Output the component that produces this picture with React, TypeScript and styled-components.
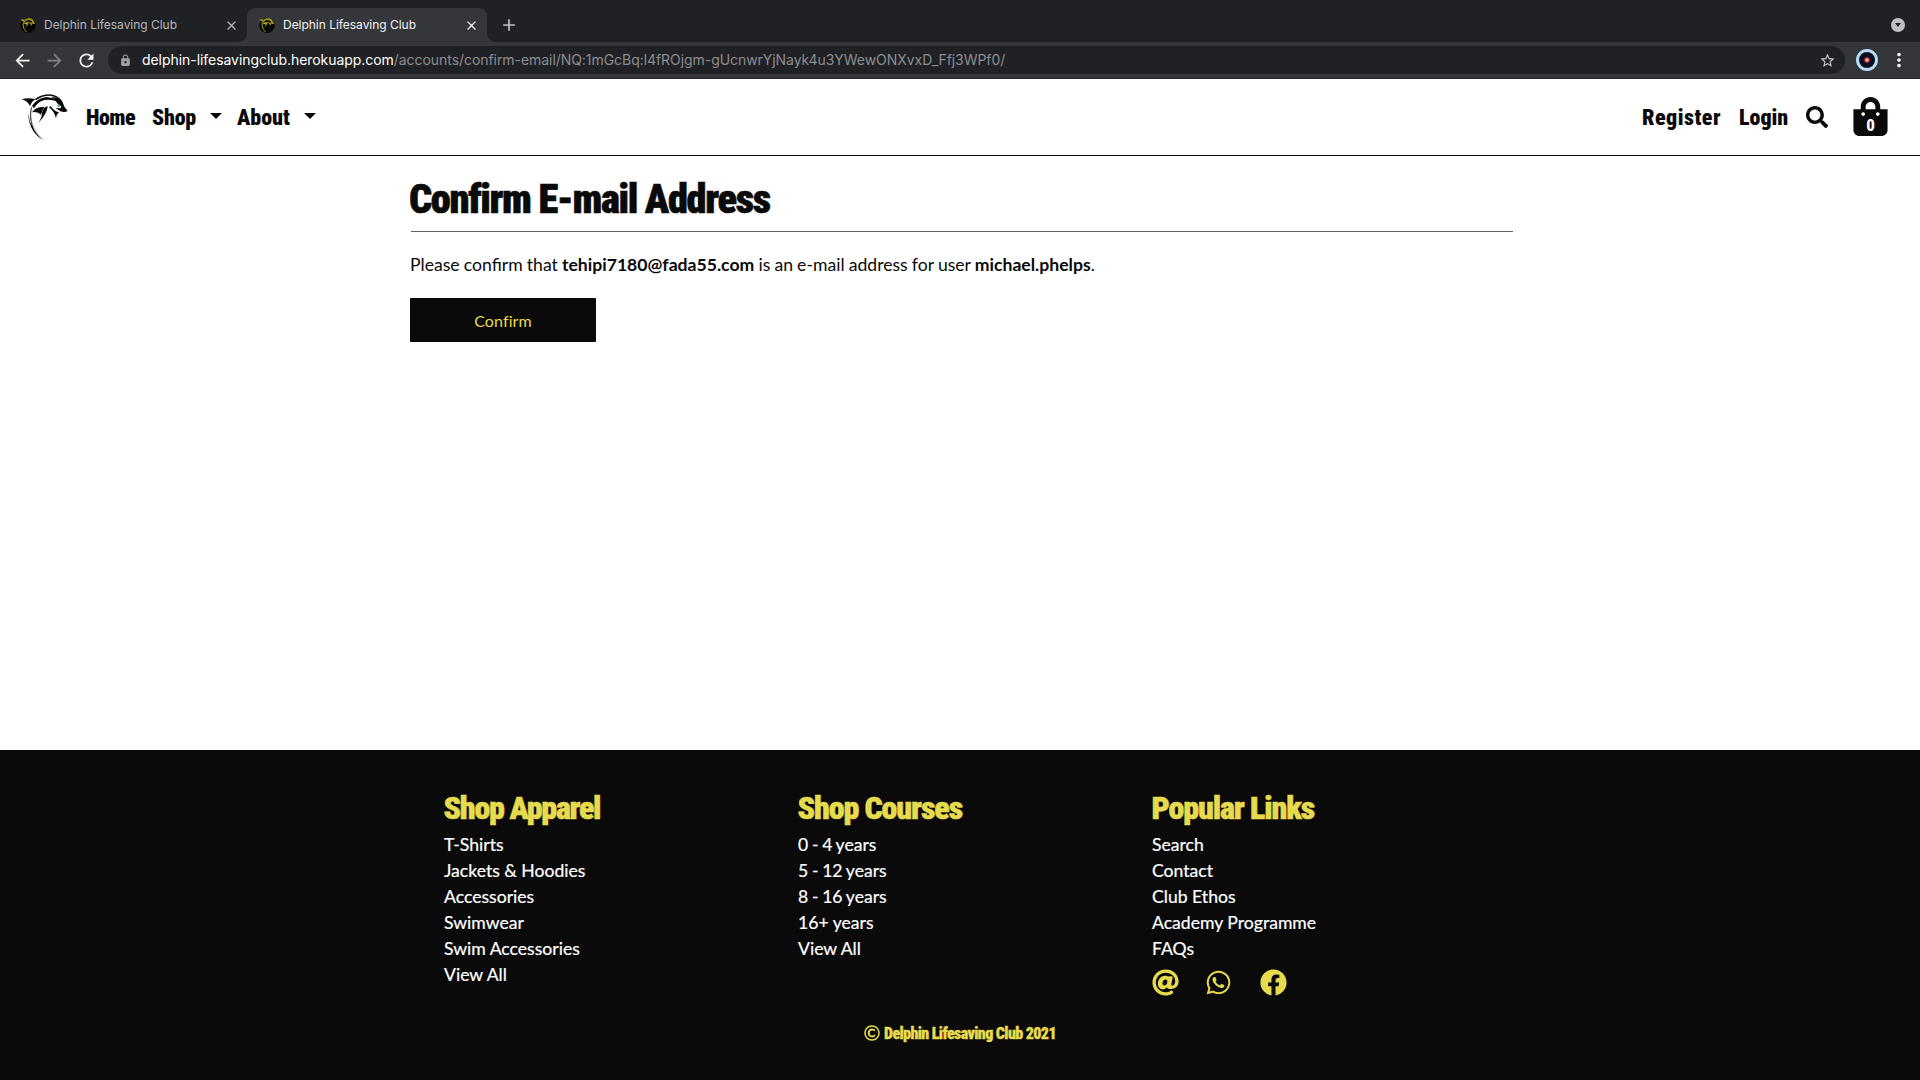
import React from "react";
import styled, { createGlobalStyle, css } from "styled-components";
import { FaAt, FaFacebook, FaRegCopyright, FaSearch, FaShoppingBag, FaWhatsapp } from "react-icons/fa";
import { MdAdd, MdArrowBack, MdArrowForward, MdClose, MdLock, MdMoreVert, MdRefresh, MdStarBorder } from "react-icons/md";

const ink = "#0a0a0a";
const yellow = "#e6db4e";

const GlobalStyle = createGlobalStyle`
  * { box-sizing: border-box; }
  body { margin: 0; background: #fff; color: ${ink}; font-family: Lato, sans-serif; }
  svg { display: block; flex: none; }
  a { color: inherit; text-decoration: none; }
`;

const display = css`
  font-family: Roboto, sans-serif;
  font-stretch: 75%;
  font-weight: 900;
  white-space: nowrap;
`;

const Page = styled.div`
  display: flex;
  flex-direction: column;
  width: 100%;
  height: 1080px;
  overflow: hidden;
`;

/* Browser chrome */
const TabStrip = styled.div`
  display: flex;
  align-items: flex-end;
  height: 42px;
  flex: none;
  background: #202124;
  color: #bdc1c6;
  font: 400 12px Inter, sans-serif;
`;

const Tab = styled.div<{ $active?: boolean }>`
  position: relative;
  display: flex;
  align-items: center;
  width: ${(p) => (p.$active ? 240 : 239)}px;
  height: 34px;
  padding: 0 8px 0 12px;
  margin-left: ${(p) => (p.$active ? 0 : 8)}px;
  border-radius: 8px 8px 0 0;
  background: ${(p) => (p.$active ? "#35363a" : "transparent")};
  color: ${(p) => (p.$active ? "#f1f3f4" : "#b4b7bb")};

  ${(p) =>
    p.$active &&
    css`
      &::before,
      &::after {
        content: "";
        position: absolute;
        bottom: 0;
        width: 8px;
        height: 8px;
      }
      &::before {
        left: -8px;
        background: radial-gradient(circle at 0 0, transparent 7.5px, #35363a 8px);
      }
      &::after {
        right: -8px;
        background: radial-gradient(circle at 100% 0, transparent 7.5px, #35363a 8px);
      }
    `}
`;

const TabTitle = styled.span`
  flex: 1;
  margin-left: 8px;
  letter-spacing: -0.03px;
  line-height: 16px;
  white-space: nowrap;
`;

const NewTab = styled.div`
  display: flex;
  margin-left: 12px;
  padding-bottom: 7px;
`;

const TabSearch = styled.div`
  display: flex;
  align-items: center;
  justify-content: center;
  width: 14px;
  height: 14px;
  margin: 0 15px 10px auto;
  border-radius: 50%;
  background: #bdc1c6;

  &::after {
    content: "";
    border: 3.5px solid transparent;
    border-top: 4.5px solid #202124;
    border-bottom: 0;
  }
`;

const Toolbar = styled.div`
  display: flex;
  align-items: center;
  height: 37px;
  flex: none;
  padding: 0 10px 0 11.5px;
  border-bottom: 1px solid #242528;
  background: #35363a;
  color: #f1f3f4;
`;

const ToolButtons = styled.div`
  display: flex;
  gap: 11px;
  width: 96.5px;
`;

const Dimmed = styled.span`
  color: #808286;
`;

const AddressBar = styled.div`
  display: flex;
  align-items: center;
  flex: 1;
  height: 28px;
  padding: 0 9px 0 11px;
  border-radius: 14px;
  background: #202124;
  color: #9aa0a6;
  font: 400 14px Inter, sans-serif;
`;

const Url = styled.span`
  flex: 1;
  margin: -1px 0 0 10px;
  color: #8b8d91;
  letter-spacing: -0.055px;
  white-space: nowrap;
`;

const Domain = styled.span`
  color: #fff;
`;

const Avatar = styled.div`
  width: 22px;
  height: 22px;
  margin: 0 10px 0 11px;
  border: 3px solid #b5dcf8;
  border-radius: 50%;
  background: radial-gradient(circle, #ffc06a 0 1px, #e6395f 2px, #3b1233 3px, #0b0e20 4px);
`;

/* Site header */
const Header = styled.header`
  display: flex;
  align-items: center;
  justify-content: space-between;
  height: 77px;
  flex: none;
  padding: 0 30px 0 21px;
  border-bottom: 1px solid ${ink};
`;

const NavGroup = styled.nav`
  display: flex;
  align-items: center;
`;

const NavLink = styled.a<{ $width: number; $gap?: number; $spacing?: number }>`
  ${display}
  display: block;
  width: ${(p) => p.$width}px;
  margin-top: 2px;
  margin-left: ${(p) => p.$gap ?? 16}px;
  font-size: 22px;
  line-height: 28px;
  letter-spacing: ${(p) => p.$spacing ?? 0}px;
`;

const Caret = styled.span`
  margin: -3px 0 0 12px;
  border: 6.5px solid transparent;
  border-top: 6px solid ${ink};
  border-bottom: 0;
`;

const SearchLink = styled.a`
  margin-left: 17px;
`;

const Bag = styled.a`
  display: grid;
  place-items: center;
  margin: -1px 0 0 23px;

  > * {
    grid-area: 1 / 1;
  }
`;

const BagCount = styled.span`
  ${display}
  margin-top: 16px;
  color: #fff;
  font-size: 17px;
  font-weight: 800;
  line-height: 18px;
`;

/* Main content */
const Main = styled.main`
  flex: 1;
  width: 1103px;
  margin-left: 410px;
`;

const Title = styled.h1`
  ${display}
  height: 76px;
  margin: 0 0 0 1px;
  padding-top: 19px;
  border-bottom: 1px solid #626262;
  font-size: 40.5px;
  line-height: 48px;
  letter-spacing: -1.38px;
  text-indent: -2px;
  -webkit-text-stroke: 0.6px ${ink};
`;

const Message = styled.p`
  margin: 20px 0;
  font-size: 17.6px;
  line-height: 26px;
  word-spacing: -0.35px;
`;

const ConfirmButton = styled.button`
  display: block;
  width: 186px;
  height: 44px;
  padding: 0;
  border: 0;
  border-radius: 1px;
  background: ${ink};
  color: ${yellow};
  font: 400 16px Lato, sans-serif;
  letter-spacing: 0.1px;
`;

/* Footer */
const Footer = styled.footer`
  height: 330px;
  flex: none;
  padding: 38px 444px 0;
  background: ${ink};
  color: #fff;
`;

const Columns = styled.div`
  display: grid;
  grid-template-columns: repeat(3, 354px);
  height: 226px;
`;

const ColumnTitle = styled.h2<{ $spacing: number }>`
  ${display}
  margin: 0 0 4px -0.5px;
  color: ${yellow};
  font-size: 32px;
  line-height: 40px;
  letter-spacing: ${(p) => p.$spacing}px;
  -webkit-text-stroke: 0.5px ${yellow};
`;

const LinkItem = styled.a`
  display: block;
  font-size: 17.6px;
  line-height: 26px;
  -webkit-text-stroke: 0.2px #fff;

  &[data-numeric="true"] {
    word-spacing: -0.8px;
  }
`;

const Social = styled.div`
  display: flex;
  align-items: center;
  margin-top: 7px;
  color: ${yellow};

  svg:nth-child(2) { margin-left: 25.5px; }
  svg:nth-child(3) { margin-left: 28.5px; }
`;

const Copyright = styled.div`
  ${display}
  display: flex;
  align-items: center;
  justify-content: center;
  gap: 4px;
  height: 38px;
  color: ${yellow};
  font-size: 16px;
  letter-spacing: -0.6px;
  -webkit-text-stroke: 0.3px ${yellow};
`;

const DolphinShape = ({ fill }: { fill: string }) => (
  <g fill={fill}>
    <path d="M35 43Q54 37 76 43Q65 49 60 63Q53 48 35 43Z" />
    <path d="M74 43Q93 28 120 28Q145 31 156 49Q146 37 120 32Q96 32 79 45Z" />
    <path d="M66 62Q82 39 109 36Q129 37 143 49Q122 43 104 45Q84 49 72 70Z" />
    <path d="M124 37Q151 35 158 52Q161 66 173 78Q164 84 151 79L137 69L151 70L154 64Q143 60 141 53Q134 44 124 37Z" />
    <path d="M66 82Q78 64 104 66Q96 74 93 89Q84 79 66 82Z" />
    <path d="M113 63Q112 86 85 114Q96 96 96 83Q99 68 113 63Z" />
    <path d="M117 67Q132 78 138 100Q140 87 147 82Q130 78 122 63Z" />
    <path d="M61 60Q48 93 63 125Q74 151 98 164Q75 145 68 123Q59 94 66 66L63 68Q56 95 66 123Q48 91 61 60Z" />
  </g>
);

const Dolphin = () => (
  <svg width="48" height="48" viewBox="33 24 144 144">
    <DolphinShape fill={ink} />
    <path d="M66 66Q57 96 71 125Q80 147 98 164" fill="none" stroke="#777" strokeWidth="1.5" />
    <circle cx="146" cy="62" r="4" fill="#48aaa6" />
  </svg>
);

const Favicon = () => (
  <svg width="16" height="16" viewBox="0 0 48 48">
    <circle cx="24" cy="25" r="23" fill="#050505" />
    <g transform="translate(-9 -5) scale(.31)">
      <g stroke="#c4b82a" strokeWidth="2"><DolphinShape fill="#c4b82a" /></g>
    </g>
  </svg>
);

const columns = [
  { title: "Shop Apparel", spacing: -1.3, links: ["T-Shirts", "Jackets & Hoodies", "Accessories", "Swimwear", "Swim Accessories", "View All"] },
  { title: "Shop Courses", spacing: -1.12, links: ["0 - 4 years", "5 - 12 years", "8 - 16 years", "16+ years", "View All"] },
  { title: "Popular Links", spacing: -1.12, links: ["Search", "Contact", "Club Ethos", "Academy Programme", "FAQs"] },
];

export default function App() {
  return (
    <Page>
      <GlobalStyle />
      <TabStrip>
        <Tab>
          <Favicon />
          <TabTitle>Delphin Lifesaving Club</TabTitle>
          <MdClose size={15} />
        </Tab>
        <Tab $active>
          <Favicon />
          <TabTitle>Delphin Lifesaving Club</TabTitle>
          <MdClose size={15} />
        </Tab>
        <NewTab><MdAdd size={20} /></NewTab>
        <TabSearch />
      </TabStrip>
      <Toolbar>
        <ToolButtons>
          <MdArrowBack size={21} />
          <Dimmed><MdArrowForward size={21} /></Dimmed>
          <MdRefresh size={21} />
        </ToolButtons>
        <AddressBar>
          <MdLock size={13} />
          <Url><Domain>delphin-lifesavingclub.herokuapp.com</Domain>/accounts/confirm-email/NQ:1mGcBq:l4fROjgm-gUcnwrYjNayk4u3YWewONXvxD_Ffj3WPf0/</Url>
          <MdStarBorder size={17} color="#c4c7cb" />
        </AddressBar>
        <Avatar />
        <MdMoreVert size={22} />
      </Toolbar>

      <Header>
        <NavGroup>
          <Dolphin />
          <NavLink href="#" $width={50} $gap={17} $spacing={-0.5}>Home</NavLink>
          <NavLink href="#" $width={46} $spacing={-0.2}>Shop</NavLink>
          <Caret />
          <NavLink href="#" $width={55} $gap={15} $spacing={0}>About</NavLink>
          <Caret />
        </NavGroup>
        <NavGroup>
          <NavLink href="#" $width={81} $spacing={0.5}>Register</NavLink>
          <NavLink href="#" $width={50} $spacing={0}>Login</NavLink>
          <SearchLink href="#"><FaSearch size={22} /></SearchLink>
          <Bag href="#">
            <FaShoppingBag size={39} />
            <BagCount>0</BagCount>
          </Bag>
        </NavGroup>
      </Header>

      <Main>
        <Title>Confirm E-mail Address</Title>
        <Message>
          Please confirm that <b>tehipi7180@fada55.com</b> is an e-mail address for user <b>michael.phelps</b>.
        </Message>
        <ConfirmButton>Confirm</ConfirmButton>
      </Main>

      <Footer>
        <Columns>
          {columns.map((column) => (
            <div key={column.title}>
              <ColumnTitle $spacing={column.spacing}>{column.title}</ColumnTitle>
              {column.links.map((link) => (
                <LinkItem key={link} href="#" data-numeric={link.includes(" - ")}>{link}</LinkItem>
              ))}
              {column.title === "Popular Links" && (
                <Social>
                  <FaAt size={27} />
                  <FaWhatsapp size={27} />
                  <FaFacebook size={27} />
                </Social>
              )}
            </div>
          ))}
        </Columns>
        <Copyright>
          <FaRegCopyright size={16} />
          Delphin Lifesaving Club 2021
        </Copyright>
      </Footer>
    </Page>
  );
}
